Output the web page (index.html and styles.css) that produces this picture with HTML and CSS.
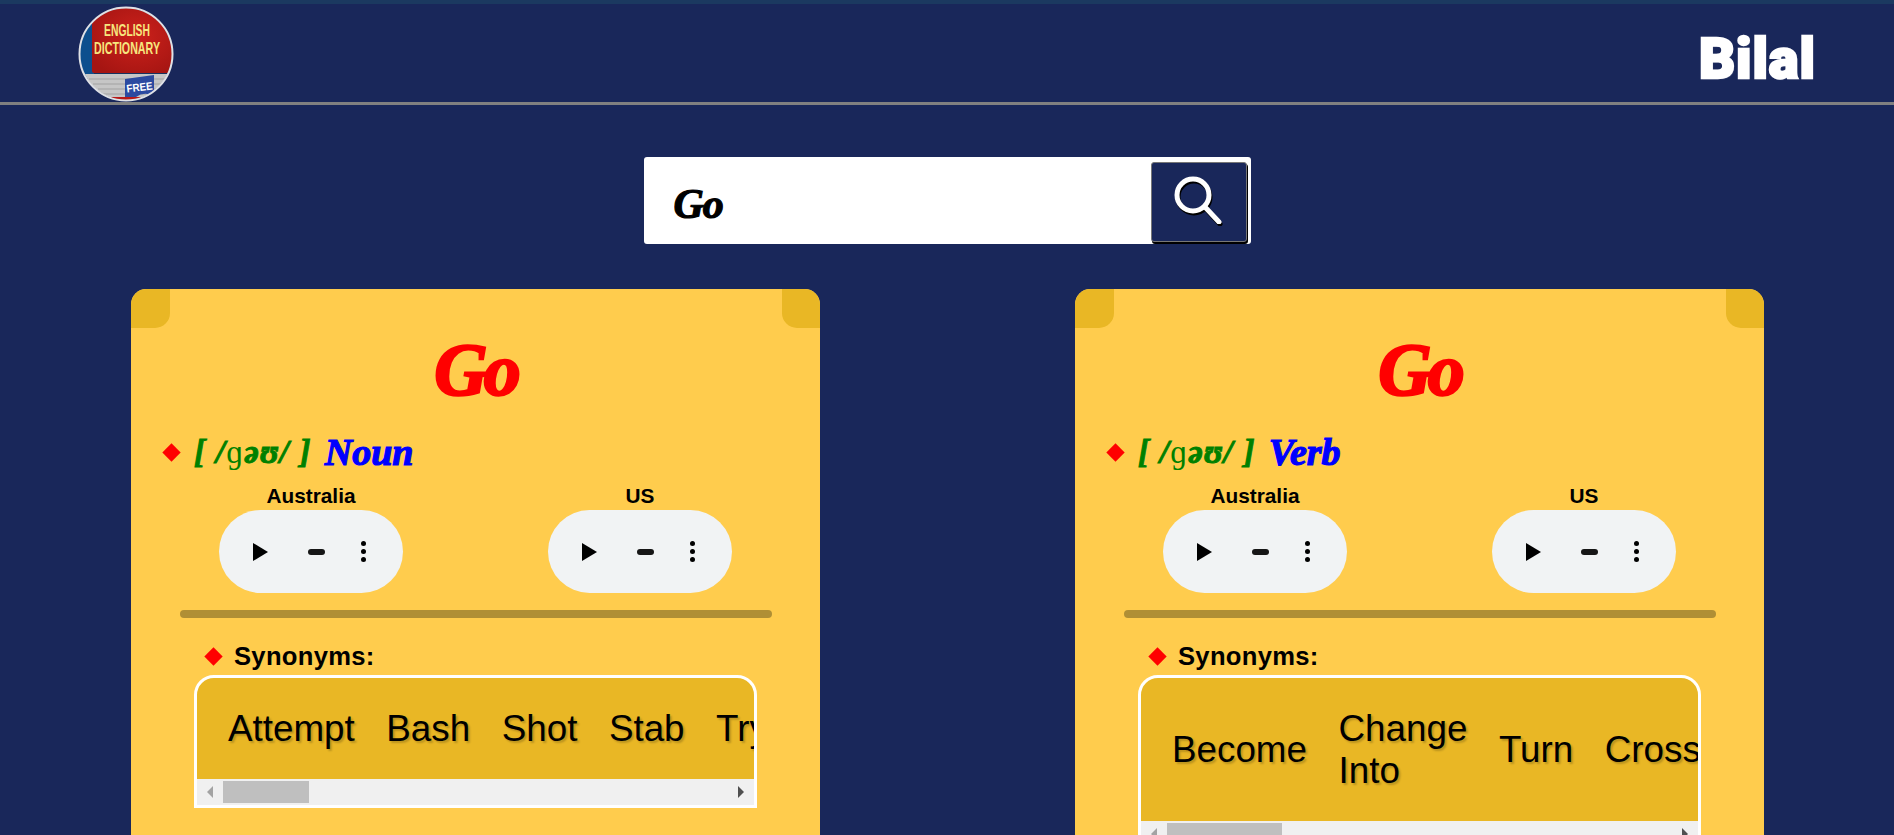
FILE: index.html
```html
<!DOCTYPE html>
<html lang="en">
<head>
<meta charset="utf-8">
<title>English Dictionary</title>
<link rel="stylesheet" href="styles.css">
</head>
<body>
<header class="topbar">
  <svg class="logo" viewBox="0 0 96 96" width="96" height="96" aria-label="English Dictionary Free">
    <defs>
      <clipPath id="disc"><circle cx="48" cy="48" r="46"/></clipPath>
      <radialGradient id="cover" cx="55%" cy="45%" r="65%">
        <stop offset="0" stop-color="#cc211b"/>
        <stop offset="1" stop-color="#a51512"/>
      </radialGradient>
    </defs>
    <g clip-path="url(#disc)">
      <rect width="96" height="96" fill="#16325f"/>
      <rect x="0" y="0" width="16" height="72" fill="#0d4f8e"/>
      <rect x="14" y="0" width="82" height="67" rx="2" fill="url(#cover)"/>
      <path d="M7 68 H96 V92 H26 Q14 84 7 68 Z" fill="#c6c6c6"/>
      <path d="M11 73 H96 M15 78 H96 M20 83 H96 M25 88 H96" stroke="#a2a2a2" stroke-width="1"/>
      <rect x="20" y="91" width="76" height="6" fill="#b81a18"/>
      <path d="M47 73 L76 69 V90 Q66 85 58 91 L47 91 Z" fill="#2c4aa0"/>
    </g>
    <text x="49" y="30" class="logo-word" textLength="46" lengthAdjust="spacingAndGlyphs">ENGLISH</text>
    <text x="49" y="48" class="logo-word" textLength="66" lengthAdjust="spacingAndGlyphs">DICTIONARY</text>
    <text x="62" y="85" class="logo-free" textLength="26" lengthAdjust="spacingAndGlyphs" transform="rotate(-7 62 85)">FREE</text>
    <circle cx="48" cy="48" r="46.5" fill="none" stroke="#dfe1e6" stroke-width="2"/>
  </svg>
  <div class="brand">Bilal</div>
</header>

<main>
  <form class="search">
    <input class="search-input" type="text" value="Go" aria-label="Search">
    <button class="search-btn" type="button" aria-label="Search">
      <svg class="search-icon" viewBox="0 0 50 48" width="50" height="48">
        <path d="M31 31 L45 46" fill="none" stroke="#fff" stroke-width="5" stroke-linecap="round"/>
        <circle cx="19" cy="19" r="16" fill="none" stroke="#fff" stroke-width="5"/>
      </svg>
    </button>
  </form>

  <section class="cards">
    <article class="card">
      <h1 class="word">Go</h1>
      <div class="pron">
        <span class="diamond"></span>
        <span class="ipa">[ /<span class="ipa-g">ɡ</span>əʊ/ ]</span>
        <span class="pos">Noun</span>
      </div>
      <div class="audios">
        <div class="audio">
          <div class="audio-label">Australia</div>
          <div class="player"><span class="play"></span><span class="dash"></span><span class="dots"><i></i><i></i><i></i></span></div>
        </div>
        <div class="audio">
          <div class="audio-label">US</div>
          <div class="player"><span class="play"></span><span class="dash"></span><span class="dots"><i></i><i></i><i></i></span></div>
        </div>
      </div>
      <div class="rule"></div>
      <div class="syn-head"><span class="diamond"></span><span class="syn-title">Synonyms:</span></div>
      <div class="syn-box">
        <div class="syn-list">
          <span class="syn-item">Attempt</span>
          <span class="syn-item">Bash</span>
          <span class="syn-item">Shot</span>
          <span class="syn-item">Stab</span>
          <span class="syn-item">Try</span>
        </div>
        <div class="bar"><span class="arrow-l"></span><span class="thumb thumb-a"></span><span class="arrow-r"></span></div>
      </div>
    </article>

    <article class="card">
      <h1 class="word">Go</h1>
      <div class="pron">
        <span class="diamond"></span>
        <span class="ipa">[ /<span class="ipa-g">ɡ</span>əʊ/ ]</span>
        <span class="pos">Verb</span>
      </div>
      <div class="audios">
        <div class="audio">
          <div class="audio-label">Australia</div>
          <div class="player"><span class="play"></span><span class="dash"></span><span class="dots"><i></i><i></i><i></i></span></div>
        </div>
        <div class="audio">
          <div class="audio-label">US</div>
          <div class="player"><span class="play"></span><span class="dash"></span><span class="dots"><i></i><i></i><i></i></span></div>
        </div>
      </div>
      <div class="rule"></div>
      <div class="syn-head"><span class="diamond"></span><span class="syn-title">Synonyms:</span></div>
      <div class="syn-box">
        <div class="syn-list">
          <span class="syn-item">Become</span>
          <span class="syn-item">Change Into</span>
          <span class="syn-item">Turn</span>
          <span class="syn-item">Cross</span>
        </div>
        <div class="bar"><span class="arrow-l"></span><span class="thumb thumb-b"></span><span class="arrow-r"></span></div>
      </div>
    </article>
  </section>
</main>
</body>
</html>
```

FILE: styles.css
```css
* { box-sizing: border-box; }
html, body { height: 100%; }
body {
  margin: 0;
  height: 835px;
  overflow: hidden;
  background: #19275a;
  font-family: "Liberation Sans", Arial, sans-serif;
  color: #000;
}

.topbar {
  height: 105px;
  display: flex;
  align-items: center;
  justify-content: space-between;
  padding: 0 78px 0 78px;
  border-top: 4px solid #1b3960;
  border-bottom: 3px solid #808080;
}
.logo { display: block; margin-top: 2px; }
.logo-word {
  font-family: "Liberation Sans", Arial, sans-serif;
  font-weight: 700;
  font-size: 17px;
  fill: #f6e67e;
  text-anchor: middle;
}
.logo-free {
  font-family: "Liberation Sans", Arial, sans-serif;
  font-weight: 700;
  font-size: 11px;
  fill: #fff;
  text-anchor: middle;
}
.brand {
  font-family: Roboto, "Liberation Sans", sans-serif;
  font-weight: 900;
  font-size: 56px;
  line-height: 1;
  color: #fff;
  -webkit-text-stroke: 2.5px #fff;
  letter-spacing: 1px;
  text-shadow: 1px 1px 1px rgba(255, 255, 255, 0.4);
  margin-top: 12px;
}

.search {
  width: 607px;
  height: 87px;
  margin: 52px auto 45px;
  padding: 4px 4px 2px 30px;
  display: flex;
  align-items: center;
  background: #fff;
  border-radius: 3px;
}
.search-input {
  flex: 1;
  min-width: 0;
  border: 0;
  outline: 0;
  padding: 4px 0 0;
  background: transparent;
  font-family: "Liberation Serif", serif;
  font-style: italic;
  font-weight: 700;
  font-size: 42px;
  letter-spacing: -1px;
  color: #000;
  -webkit-text-stroke: 1.2px #000;
}
.search-btn {
  width: 96px;
  height: 80px;
  padding: 0;
  display: flex;
  align-items: center;
  justify-content: center;
  background: #19275a;
  border: 1px solid #777;
  border-radius: 3px;
  box-shadow: 1px 2px 0 #000;
}
.search-icon {
  display: block;
  margin: 0 0 3px 0;
  filter: drop-shadow(1px 2px 0 #000);
}

.cards {
  display: flex;
  justify-content: space-between;
  padding: 0 130px 0 131px;
}
.card {
  position: relative;
  width: 689px;
  height: 620px;
  flex: none;
  background: #ffcc4d;
  border-radius: 15px 15px 0 0;
  overflow: hidden;
}
.card::before,
.card::after {
  content: "";
  position: absolute;
  top: 0;
  height: 39px;
  background: #e9b725;
}
.card::before { left: 0; width: 39px; border-radius: 15px 0 15px 0; }
.card::after { right: 0; width: 38px; border-radius: 0 15px 0 15px; }

.word {
  margin: 0;
  padding-top: 36px;
  height: 136px;
  text-align: center;
  font-family: "Liberation Serif", serif;
  font-style: italic;
  font-weight: 700;
  font-size: 74px;
  line-height: 90px;
  letter-spacing: -4px;
  color: #f00;
  -webkit-text-stroke: 2.5px #f00;
}

.pron {
  display: flex;
  align-items: center;
  height: 54px;
  margin-bottom: 5px;
  padding-left: 34px;
  font-family: "Liberation Serif", serif;
  font-style: italic;
  font-weight: 700;
  font-size: 38px;
}
.diamond {
  width: 13px;
  height: 13px;
  flex: none;
  background: #f00;
  transform: rotate(45deg);
}
.ipa {
  margin-left: 16px;
  color: #008000;
  font-size: 33px;
  letter-spacing: 1.3px;
  white-space: pre;
  -webkit-text-stroke: 1px #008000;
}
.ipa-g {
  font-style: normal;
  font-weight: 400;
  -webkit-text-stroke: 0;
}
.pos {
  margin-left: 13px;
  color: #00f;
  -webkit-text-stroke: 1.2px #00f;
}

.audios {
  display: flex;
  gap: 145px;
  padding-left: 88px;
}
.audio { width: 184px; }
.audio-label {
  height: 26px;
  line-height: 24px;
  text-align: center;
  font-weight: 700;
  font-size: 20.8px;
}
.player {
  height: 83px;
  display: flex;
  align-items: center;
  padding-left: 34px;
  background: #f1f3f4;
  border-radius: 42px;
}
.play {
  width: 0;
  height: 0;
  border-left: 15px solid #000;
  border-top: 9.5px solid transparent;
  border-bottom: 9.5px solid transparent;
}
.dash {
  width: 17px;
  height: 6px;
  margin-left: 40px;
  background: #161616;
  border-radius: 3px;
}
.dots {
  display: flex;
  flex-direction: column;
  gap: 3px;
  margin-left: 36px;
}
.dots i {
  display: block;
  width: 5px;
  height: 5px;
  background: #000;
  border-radius: 50%;
}

.rule {
  height: 8px;
  margin: 17px 48px 0 49px;
  background: #b08f35;
  border-radius: 4px;
}

.syn-head {
  display: flex;
  align-items: center;
  height: 57px;
  padding: 19px 0 0 76px;
}
.syn-title {
  margin-left: 14px;
  font-weight: 700;
  font-size: 25.6px;
  letter-spacing: 0.3px;
}

.syn-box {
  width: 563px;
  margin-left: 63px;
  border: 3px solid #fff;
  border-radius: 20px 20px 0 0;
  overflow: hidden;
  background: #e9b725;
}
.syn-list {
  display: flex;
  align-items: center;
  gap: 31.5px;
  padding: 30px 0 29px 31px;
  overflow: hidden;
}
.syn-item {
  width: min-content;
  flex: none;
  font-size: 36.8px;
  text-shadow: 2px 2px 2px rgba(0, 0, 0, 0.2);
}
.bar {
  display: flex;
  align-items: center;
  height: 26px;
  padding: 0 10px;
  background: #f0f0f0;
}
.arrow-l,
.arrow-r {
  width: 0;
  height: 0;
  border-top: 6px solid transparent;
  border-bottom: 6px solid transparent;
}
.arrow-l { border-right: 6px solid #a3a3a3; }
.arrow-r { margin-left: auto; border-left: 6px solid #505050; }
.thumb {
  height: 22px;
  margin-left: 10px;
  background: #bfbfbf;
}
.thumb-a { width: 86px; }
.thumb-b { width: 115px; }
```
